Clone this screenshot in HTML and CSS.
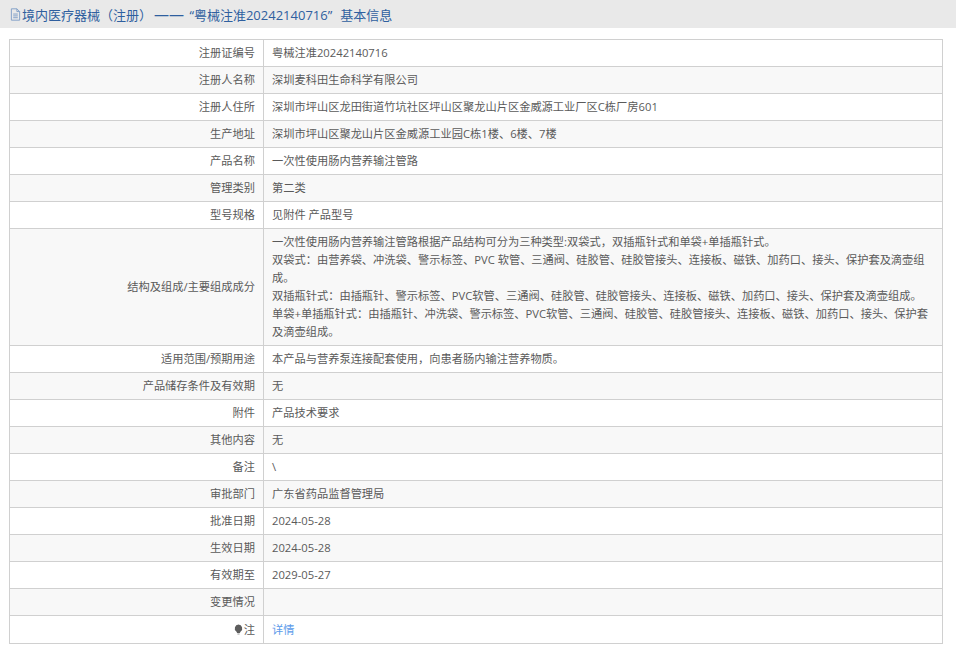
FILE: index.html
```html
<!DOCTYPE html>
<html lang="zh">
<head>
<meta charset="utf-8">
<title>基本信息</title>
<link rel="stylesheet" href="styles.css">
</head>
<body>
<header class="title-bar">
  <svg class="doc-icon" viewBox="0 0 12 14" width="11" height="13" aria-hidden="true"><path d="M1.500 .8h6l3 3v9.400h-9z M7.500 .8v3h3 M3.500 6.500h5 M3.500 8.500h5 M3.500 10.500h5" fill="none" stroke="#7d9cc6" stroke-width="1"/></svg>
  <span class="title-text">境内医疗器械（注册）<span class="title-dash">——</span> “粤械注准20242140716”<span class="title-end">基本信息</span></span>
</header>
<main class="content">
<table class="info">
<tbody>
<tr><th>注册证编号</th><td>粤械注准20242140716</td></tr>
<tr><th>注册人名称</th><td>深圳麦科田生命科学有限公司</td></tr>
<tr><th>注册人住所</th><td>深圳市坪山区龙田街道竹坑社区坪山区聚龙山片区金威源工业厂区C栋厂房601</td></tr>
<tr><th>生产地址</th><td>深圳市坪山区聚龙山片区金威源工业园C栋1楼、6楼、7楼</td></tr>
<tr><th>产品名称</th><td>一次性使用肠内营养输注管路</td></tr>
<tr><th>管理类别</th><td>第二类</td></tr>
<tr><th>型号规格</th><td>见附件 产品型号</td></tr>
<tr><th>结构及组成/主要组成成分</th><td>一次性使用肠内营养输注管路根据产品结构可分为三种类型:双袋式，双插瓶针式和单袋+单插瓶针式。<br>双袋式：由营养袋、冲洗袋、警示标签、PVC 软管、三通阀、硅胶管、硅胶管接头、连接板、磁铁、加药口、接头、保护套及滴壶组成。<br>双插瓶针式：由插瓶针、警示标签、PVC软管、三通阀、硅胶管、硅胶管接头、连接板、磁铁、加药口、接头、保护套及滴壶组成。<br>单袋+单插瓶针式：由插瓶针、冲洗袋、警示标签、PVC软管、三通阀、硅胶管、硅胶管接头、连接板、磁铁、加药口、接头、保护套及滴壶组成。</td></tr>
<tr><th>适用范围/预期用途</th><td>本产品与营养泵连接配套使用，向患者肠内输注营养物质。</td></tr>
<tr><th>产品储存条件及有效期</th><td>无</td></tr>
<tr><th>附件</th><td>产品技术要求</td></tr>
<tr><th>其他内容</th><td>无</td></tr>
<tr><th>备注</th><td>\</td></tr>
<tr><th>审批部门</th><td>广东省药品监督管理局</td></tr>
<tr><th>批准日期</th><td>2024-05-28</td></tr>
<tr><th>生效日期</th><td>2024-05-28</td></tr>
<tr><th>有效期至</th><td>2029-05-27</td></tr>
<tr><th>变更情况</th><td></td></tr>
<tr class="last-row"><th><svg class="bulb" viewBox="0 0 10 12" width="9" height="11" aria-hidden="true"><path d="M5 .5a4.200 4.200 0 0 1 2.400 7.600L6.500 10h-3l-.9-1.900A4.200 4.200 0 0 1 5 .5z" fill="#5d5d5d"/><path d="M3.800 11h2.400" stroke="#8d8d8d"/></svg>注</th><td><a class="detail" href="#">详情</a></td></tr>
</tbody>
</table>
</main>
</body>
</html>
```
FILE: styles.css
```css
* { box-sizing: border-box; }
html, body { margin: 0; padding: 0; background: #fff; }
body {
  font-family: "Open Sans", "Noto Sans CJK SC", sans-serif;
  font-size: 11.24px;
  line-height: 18px;
  color: #5a5a5a;
}
.title-bar {
  height: 28px;
  background: #e9e9e9;
  display: flex;
  align-items: center;
  padding-left: 10px;
  gap: 1px;
  color: #2f5f9f;
  font-size: 13px;
  word-spacing: 2px;
}
.title-dash { font-size: 15px; margin-left: 2px; }
.title-end { margin-left: 8px; }
.doc-icon { flex: none; }
.content { padding: 11px 13px 0 9px; }
.info {
  width: 100%;
  table-layout: fixed;
  border-collapse: collapse;
  border: 1px solid #d0d0d0;
}
.info th, .info td {
  border: 1px solid #d0d0d0;
  padding: 4px 8px;
  vertical-align: middle;
  font-weight: 400;
  height: 27px;
}
.info th { width: 254px; text-align: right; }
.info td { text-align: left; }
.info tr:nth-child(even) { background: #f8f8f8; }
.last-row th, .last-row td { height: 28px; padding-top: 5px; }
.bulb { vertical-align: -1px; margin-right: 1px; }
.detail { color: #5b9bea; text-decoration: none; }
```
